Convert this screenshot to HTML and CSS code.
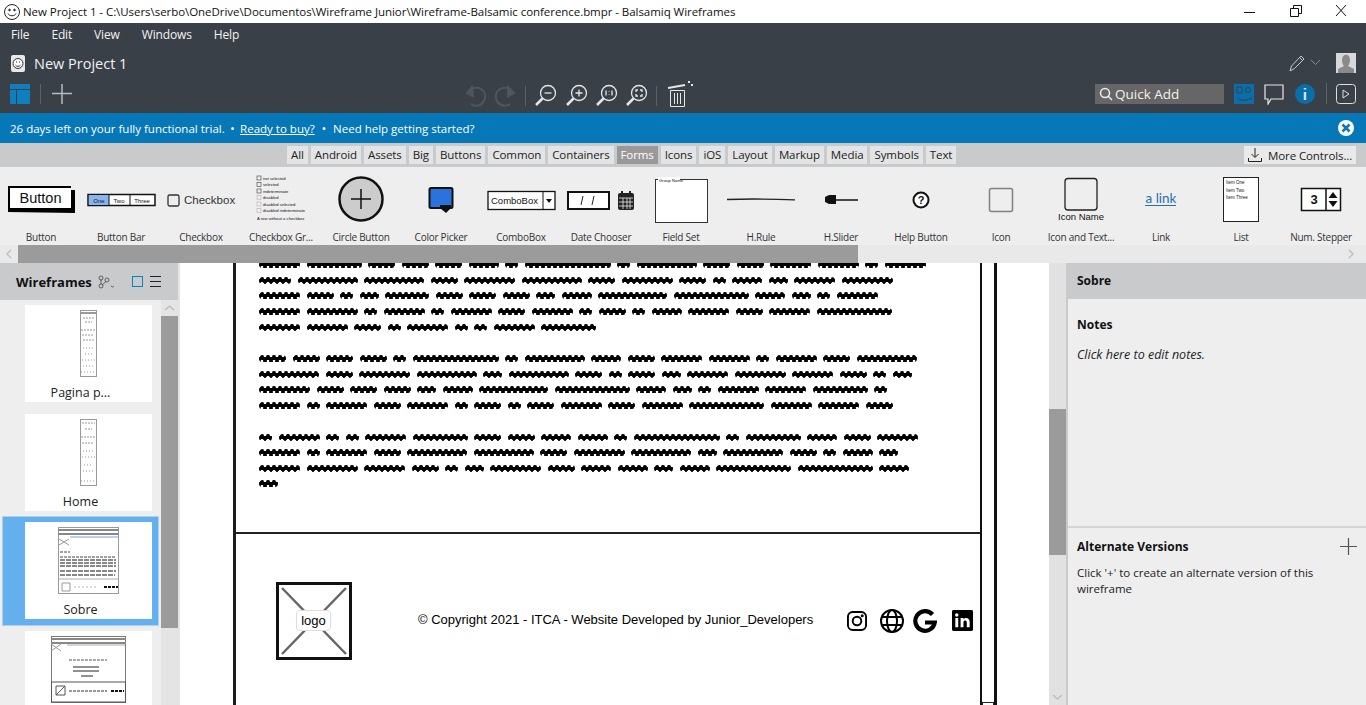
FILE: index.html
```html
<!DOCTYPE html>
<html lang="en">
<head>
    <meta charset="UTF-8">
    <title>New Project 1 - Balsamiq Wireframes</title>
    <link rel="stylesheet" href="styles.css">
</head>
<body>
    <div class="titlebar">
        <svg class="app-face" width="18" height="18" viewBox="0 0 18 18" fill="none" stroke="#222"><circle cx="9" cy="9" r="7.5"/><circle cx="6.5" cy="7" r=".8" fill="#222"/><circle cx="11.5" cy="7" r=".8" fill="#222"/><path d="M5 10.5c1 3 7 3 8 0"/></svg>
        <span class="title-text">New Project 1 - C:\Users\serbo\OneDrive\Documentos\Wireframe Junior\Wireframe-Balsamic conference.bmpr - Balsamiq Wireframes</span>
        <svg class="win-controls" width="112" height="23" viewBox="0 0 112 23" fill="none" stroke="#111"><path d="M0 12.500h11"/><path d="M46.500 8.500h8v8h-8zM49.500 8.500v-3h8v8h-3"/><path d="M92 5l10 11M102 5L92 16"/></svg>
    </div>

    <div class="menubar">
        <span>File</span><span>Edit</span><span>View</span><span>Windows</span><span>Help</span>
    </div>

    <div class="project-row">
        <svg width="14" height="17" viewBox="0 0 14 17"><rect width="14" height="17" rx="2" fill="#e8e8e8"/><circle cx="7" cy="8.500" r="5" fill="#fff" stroke="#333"/><path d="M4.500 10c1 1.800 4 1.800 5 0" stroke="#333" fill="none"/><path d="M5 7h1M8 7h1" stroke="#333"/></svg>
        <span class="project-name">New Project 1</span>
        <svg class="pencil" width="32" height="18" viewBox="0 0 32 18" fill="none" stroke="#c8c8c8"><path d="M1 17l1.500-5L12 2l3 3-9.500 9.500zM10.500 3.500l3 3"/><path d="M22 6l4.500 4.500L31 6" stroke="#8b8f94"/></svg>
        <div class="avatar"><svg width="20" height="20" viewBox="0 0 20 20"><rect width="20" height="20" fill="#d8d8d8"/><path d="M6 7c0-7 8-7 8 0 0 3-1 5-2 6l6 3v4H2v-4l6-3c-1-1-2-3-2-6z" fill="#8a8a8a"/></svg></div>
    </div>

    <div class="toolbar">
        <svg width="64" height="24" viewBox="0 0 64 24"><path d="M0 0h20v5H0zM0 6h6v14H0zM7 6h13v14H7z" fill="#0f7fc0" transform="translate(0 2)"/><path d="M30.500 2v20" stroke="#5c6268"/><path d="M42 11.500h20M52 2v20" stroke="#b8babd" stroke-width="1.500"/></svg>
        <svg class="tool-mid" width="228" height="28" viewBox="0 0 228 28" fill="none">
            <g stroke="#50565c" stroke-width="2"><path d="M3 13a9 9 0 1 1 3 11"/><path d="M8 6L2 13l7 4" fill="#50565c"/><path d="M48 13a9 9 0 1 0-3 11"/><path d="M42 6l7 7-7 4" fill="#50565c"/></g>
            <path d="M60.500 6v20M191.500 6v20" stroke="#5c6268"/>
            <g stroke="#e6e6e6" stroke-width="1.300">
                <circle cx="83" cy="13" r="7.500"/><path d="M77.500 18.500L71 25" stroke-width="2.500"/><path d="M79.500 13h7"/>
                <circle cx="114" cy="13" r="7.500"/><path d="M108.500 18.500L102 25" stroke-width="2.500"/><path d="M110.500 13h7M114 9.500v7"/>
                <circle cx="144" cy="13" r="7.500"/><path d="M138.500 18.500L132 25" stroke-width="2.500"/><path d="M141 10.500v5M147 10.500v5M144 11.500v.5M144 14v.5"/>
                <circle cx="174" cy="13" r="7.500"/><path d="M168.500 18.500L162 25" stroke-width="2.500"/><path d="M171 12v-2h2M175 10h2v2M177 14v2h-2M173 16h-2v-2"/>
            </g>
            <g stroke="#e6e6e6"><path d="M203 8l17-3" stroke-width="2"/><path d="M205.500 10.500h14v16h-14zM209.500 13v11M212.500 13v11M215.500 13v11"/><path d="M224 1v2M227 4v2" stroke-width="2"/></g>
        </svg>
        <div class="quick-add">
            <svg width="14" height="14" viewBox="0 0 14 14" fill="none" stroke="#eee" stroke-width="1.500"><circle cx="6" cy="6" r="4.500"/><path d="M9 9l4 4"/></svg>
            <span>Quick Add</span>
        </div>
        <svg class="tool-right" width="122" height="22" viewBox="0 0 122 22" fill="none">
            <rect x="0" y="1" width="20" height="20" fill="#0a6eaa"/>
            <path d="M3 4h5v6H3zM3 15c4 3 10 3 14 0M17 14v3" stroke="#3a4047"/><circle cx="14" cy="7" r="2.500" stroke="#3a4047"/>
            <path d="M31 2h18v14H37l-3 5v-5h-3z" stroke="#e8e8e8" stroke-width="1.200"/>
            <circle cx="71" cy="11" r="10" fill="#0a6eaa"/><path d="M71 5v1.500M71 9v8" stroke="#cfe4f2" stroke-width="2.500"/>
            <path d="M92.500 0v21" stroke="#5c6268"/>
            <rect x="102.500" y="1.500" width="19" height="19" rx="3" stroke="#e0e0e0"/><path d="M109 7l6 4-6 4z" stroke="#e0e0e0"/>
        </svg>
    </div>

    <div class="trial-banner">
        <span>26 days left on your fully functional trial.</span><b class="dot">•</b><u>Ready to buy?</u><b class="dot dot-wide">•</b><span>Need help getting started?</span>
        <svg class="banner-close" width="16" height="16" viewBox="0 0 16 16"><circle cx="8" cy="8" r="8" fill="#fff"/><path d="M4.500 4.500l7 7M11.500 4.500l-7 7" stroke="#0678b7" stroke-width="2.500"/></svg>
    </div>

    <div class="tabs">
        <span class="tab">All</span><span class="tab">Android</span><span class="tab">Assets</span><span class="tab">Big</span><span class="tab">Buttons</span><span class="tab">Common</span><span class="tab">Containers</span><span class="tab tab-active">Forms</span><span class="tab">Icons</span><span class="tab">iOS</span><span class="tab">Layout</span><span class="tab">Markup</span><span class="tab">Media</span><span class="tab">Symbols</span><span class="tab">Text</span>
        <span class="more-controls"><svg width="14" height="14" viewBox="0 0 14 14" fill="none" stroke="#222"><path d="M7 0v9M3.500 6L7 9.500 10.500 6M.5 10v3.500h13V10"/></svg>More Controls...</span>
    </div>

    <div class="strip">
        <div class="comp"><svg width="80" height="62" viewBox="0 0 80 62"><path d="M7 16h63v4h4v23l-67-1z" fill="#000"/><rect x="9" y="18" width="61" height="20" fill="#fff"/><text x="39.500" y="33" class="sk-big">Button</text></svg><span>Button</span></div>
        <div class="comp"><svg width="80" height="62" viewBox="0 0 80 62"><rect x="7" y="24.500" width="67" height="11" fill="#fff" stroke="#111" stroke-width="1.500"/><rect x="8" y="25" width="20" height="10" fill="#8ab4f0"/><path d="M28 25v10M49 25v10" stroke="#111"/><text x="18" y="32.500" class="sk-tiny">One</text><text x="38" y="32.500" class="sk-tiny">Two</text><text x="61" y="32.500" class="sk-tiny">Three</text></svg><span>Button Bar</span></div>
        <div class="comp"><svg width="80" height="62" viewBox="0 0 80 62"><rect x="7" y="25" width="11" height="11" rx="1.500" fill="none" stroke="#333" stroke-width="1.300"/><text x="23" y="34" class="sk-label">Checkbox</text></svg><span>Checkbox</span></div>
        <div class="comp"><svg width="80" height="62" viewBox="0 0 80 62"><g fill="none" stroke="#555" stroke-width=".7"><rect x="16" y="6" width="4" height="4"/><rect x="16" y="12.500" width="4" height="4"/><rect x="16" y="19" width="4" height="4"/></g><g fill="none" stroke="#bbb" stroke-width=".7"><rect x="16" y="25.500" width="4" height="4"/><rect x="16" y="32" width="4" height="4"/><rect x="16" y="38.500" width="4" height="4"/></g><g class="sk-micro"><text x="22" y="9.500">not selected</text><text x="22" y="16">selected</text><text x="22" y="22.500">indeterminate</text><text x="22" y="29" fill="#aaa">disabled</text><text x="22" y="35.500" fill="#aaa">disabled selected</text><text x="22" y="42" fill="#aaa">disabled indeterminate</text><text x="16" y="49.500">A row without a checkbox</text></g></svg><span>Checkbox Gr...</span></div>
        <div class="comp"><svg width="80" height="62" viewBox="0 0 80 62"><circle cx="40" cy="29" r="21.500" fill="#ccc" stroke="#111" stroke-width="2.500"/><path d="M30 29h20M40 19v20" stroke="#111" stroke-width="1.500"/></svg><span>Circle Button</span></div>
        <div class="comp"><svg width="80" height="62" viewBox="0 0 80 62"><rect x="28.500" y="18" width="23" height="20" rx="1.500" fill="#2a73dc" stroke="#111" stroke-width="2"/><path d="M39 35h11v3l-5 5-6-5z" fill="#111"/></svg><span>Color Picker</span></div>
        <div class="comp"><svg width="80" height="62" viewBox="0 0 80 62"><rect x="7" y="21.500" width="67" height="18" fill="#fff" stroke="#111" stroke-width="1.300"/><path d="M62 21.500v18" stroke="#111"/><path d="M65 29h6l-3 4z" fill="#111"/><text x="10" y="33.500" class="sk-small">ComboBox</text></svg><span>ComboBox</span></div>
        <div class="comp"><svg width="80" height="62" viewBox="0 0 80 62"><rect x="7" y="22" width="41" height="17" fill="#fff" stroke="#111" stroke-width="2"/><path d="M20 35l2-9M31 35l2-9" stroke="#222"/><g fill="#222"><rect x="57" y="23" width="16" height="17" rx="2"/><path d="M60 21h2v4h-2zM68 21h2v4h-2z"/></g><path d="M58 28h14M58 32h14M58 36h14M62 28v11M66 28v11M69 28v11" stroke="#eee" stroke-width=".8"/></svg><span>Date Chooser</span></div>
        <div class="comp"><svg width="80" height="62" viewBox="0 0 80 62"><rect x="14.500" y="9.500" width="52" height="43" fill="#fff" stroke="#333"/><rect x="17" y="7" width="22" height="5" fill="#fff"/><text x="18" y="11.500" class="sk-micro">Group Name</text></svg><span>Field Set</span></div>
        <div class="comp"><svg width="80" height="62" viewBox="0 0 80 62"><path d="M6 29.500c20-.8 45-.5 68 .3" stroke="#222" stroke-width="1.300" fill="none"/></svg><span>H.Rule</span></div>
        <div class="comp"><svg width="80" height="62" viewBox="0 0 80 62"><path d="M24 30h33" stroke="#111" stroke-width="1.500"/><path d="M24 27l4-2h7v9h-7l-4-2z" fill="#111"/></svg><span>H.Slider</span></div>
        <div class="comp"><svg width="80" height="62" viewBox="0 0 80 62"><circle cx="40" cy="30" r="7.500" fill="#fff" stroke="#111" stroke-width="2"/><text x="40" y="34" class="sk-help">?</text></svg><span>Help Button</span></div>
        <div class="comp"><svg width="80" height="62" viewBox="0 0 80 62"><rect x="28.500" y="18.500" width="23" height="23" rx="2" fill="none" stroke="#808080" stroke-width="1.500"/></svg><span>Icon</span></div>
        <div class="comp"><svg width="80" height="62" viewBox="0 0 80 62"><rect x="24" y="8.500" width="32" height="31.500" rx="3" fill="none" stroke="#222" stroke-width="1.300"/><text x="40" y="50" class="sk-small">Icon Name</text></svg><span>Icon and Text...</span></div>
        <div class="comp"><svg width="80" height="62" viewBox="0 0 80 62"><text x="40" y="33" class="sk-link">a link</text><path d="M24 35.500h31" stroke="#2a6ea8"/></svg><span>Link</span></div>
        <div class="comp"><svg width="80" height="62" viewBox="0 0 80 62"><rect x="22.500" y="7.500" width="35" height="44" fill="#fff" stroke="#222"/><g class="sk-list"><text x="25" y="14">Item One</text><text x="25" y="21.500">Item Two</text><text x="25" y="29">Item Three</text></g></svg><span>List</span></div>
        <div class="comp"><svg width="80" height="62" viewBox="0 0 80 62"><rect x="20.500" y="18.500" width="39" height="22" fill="#fff" stroke="#111" stroke-width="1.500"/><path d="M45 18.500v22" stroke="#111" stroke-width="1.500"/><path d="M47.500 28l4.500-6 4.500 6zM47.500 31h9L52 37z" fill="#111"/><text x="33" y="34" class="sk-num">3</text></svg><span>Num. Stepper</span></div>
    </div>

    <div class="strip-scroll">
        <svg width="18" height="18" viewBox="0 0 18 18" fill="none" stroke="#bbb" stroke-width="1.300"><path d="M11 5L7 9l4 4"/></svg>
        <div class="strip-thumb"></div>
        <svg class="strip-next" width="18" height="18" viewBox="0 0 18 18" fill="none" stroke="#bbb" stroke-width="1.300"><path d="M7 5l4 4-4 4"/></svg>
    </div>

    <div class="main">
        <aside class="wf-panel">
            <div class="wf-head">
                <b>Wireframes</b>
                <svg class="wf-tree" width="17" height="14" viewBox="0 0 17 14" fill="none" stroke="#444" stroke-width=".8"><circle cx="3" cy="3" r="2"/><circle cx="9" cy="5" r="2"/><circle cx="3" cy="11" r="2"/><path d="M3 5v4M4 10l4-3.500M13 11l1.500 1 1.500-1"/></svg>
                <span class="wf-square"></span>
                <svg width="11" height="11" viewBox="0 0 11 11" stroke="#222"><path d="M0 .5h11M0 5.500h11M0 10.500h11"/></svg>
            </div>
            <div class="wf-body">
                <div class="wf-list">
                    <div class="wf-row">
                        <div class="wf-card">
                            <svg width="17" height="67" viewBox="0 0 17 67" fill="none" stroke="#999"><rect x=".5" y=".5" width="16" height="66"/><path d="M0 3h17" stroke-width="2"/><path d="M3 8h11M5 12h7M1 20h15M2 25h12M3 30h11" stroke-dasharray="2 1"/><path d="M3 38h11M5 44h8M2 50h13M3 56h11M1 62h15" stroke-dasharray="1 2"/></svg>
                            <span>Pagina p...</span>
                        </div>
                    </div>
                    <div class="wf-row">
                        <div class="wf-card">
                            <svg width="17" height="67" viewBox="0 0 17 67" fill="none" stroke="#999"><rect x=".5" y=".5" width="16" height="66"/><path d="M2 4h13M5 10h7M1 18h15M2 24h12" stroke-dasharray="2 1"/><path d="M3 32h11M2 38h13M4 46h9M3 52h11M1 62h15" stroke-dasharray="1 2"/></svg>
                            <span>Home</span>
                        </div>
                    </div>
                    <div class="wf-row wf-row-active">
                        <div class="wf-card">
                            <svg width="61" height="67" viewBox="0 0 61 67" fill="none" stroke="#444"><rect x=".5" y=".5" width="60" height="66" stroke="#999"/><path d="M0 3h61M0 7h61" stroke="#888" stroke-width="2"/><path d="M1 12l10 6M11 12L1 18" stroke="#999"/><path d="M12 10h48" stroke="#7aa0d8"/><path d="M2 25h10M2 30h55" stroke-dasharray="3 1"/><path d="M2 33h56M2 36h56M2 39h56M2 44h56M2 48h55" stroke="#111" stroke-dasharray="5 1"/><path d="M0 52h61" stroke="#aaa"/><path d="M4 56h8v8H4z" stroke="#999"/><path d="M16 60h24" stroke="#bbb" stroke-dasharray="2 2"/><path d="M46 60h14" stroke="#111" stroke-width="2" stroke-dasharray="3 1"/></svg>
                            <span>Sobre</span>
                        </div>
                    </div>
                    <div class="wf-row">
                        <div class="wf-card">
                            <svg width="75" height="67" viewBox="0 0 75 67" fill="none" stroke="#555"><rect x=".5" y=".5" width="74" height="66" stroke="#777"/><path d="M0 3h75M0 7h75" stroke="#888" stroke-width="2"/><path d="M0 8l10 7M10 8L0 15" stroke="#999"/><path d="M16 9h58" stroke="#aaa"/><path d="M18 24h38" stroke-dasharray="3 1"/><path d="M22 31h26M22 35h26M30 40h12" stroke="#222"/><rect x=".5" y="46" width="74" height="20"/><path d="M5 50h9v9H5zM5 59l9-9" /><path d="M18 55h38" stroke="#333" stroke-dasharray="3 1"/><path d="M60 55h13" stroke="#111" stroke-width="2" stroke-dasharray="3 1"/></svg>
                        </div>
                    </div>
                </div>
                <div class="wf-scroll">
                    <svg width="17" height="16" viewBox="0 0 17 16" fill="none" stroke="#bbb" stroke-width="1.300"><path d="M4 10l4.500-4 4.500 4"/></svg>
                    <div class="wf-scroll-thumb"></div>
                </div>
            </div>
        </aside>

        <section class="canvas">
            <div class="frame">
                <div class="page">
                    <div class="article">
                        <div class="scribble">
                            <div><i class="w41"></i><i class="w55"></i><i class="w27"></i><i class="w27"></i><i class="w27"></i><i class="w30"></i><i class="w13"></i><i class="w86"></i><i class="w13"></i><i class="w60"></i><i class="w27"></i><i class="w27"></i><i class="w41"></i><i class="w41"></i><i class="w13"></i><i class="w41"></i></div>
                            <div><i class="w32"></i><i class="w60"></i><i class="w60"></i><i class="w27"></i><i class="w51"></i><i class="w60"></i><i class="w27"></i><i class="w51"></i><i class="w27"></i><i class="w13"></i><i class="w30"></i><i class="w19"></i><i class="w41"></i><i class="w51"></i></div>
                            <div><i class="w41"></i><i class="w27"></i><i class="w13"></i><i class="w19"></i><i class="w44"></i><i class="w27"></i><i class="w27"></i><i class="w27"></i><i class="w19"></i><i class="w30"></i><i class="w69"></i><i class="w75"></i><i class="w30"></i><i class="w19"></i><i class="w13"></i><i class="w41"></i></div>
                            <div><i class="w41"></i><i class="w51"></i><i class="w13"></i><i class="w41"></i><i class="w13"></i><i class="w41"></i><i class="w27"></i><i class="w41"></i><i class="w13"></i><i class="w27"></i><i class="w13"></i><i class="w30"></i><i class="w41"></i><i class="w27"></i><i class="w41"></i><i class="w75"></i></div>
                            <div class="para-end"><i class="w41"></i><i class="w41"></i><i class="w27"></i><i class="w13"></i><i class="w41"></i><i class="w13"></i><i class="w13"></i><i class="w41"></i><i class="w55"></i></div>

                            <div><i class="w27"></i><i class="w27"></i><i class="w27"></i><i class="w27"></i><i class="w13"></i><i class="w86"></i><i class="w13"></i><i class="w60"></i><i class="w30"></i><i class="w27"></i><i class="w41"></i><i class="w41"></i><i class="w13"></i><i class="w41"></i><i class="w27"></i><i class="w60"></i></div>
                            <div><i class="w60"></i><i class="w27"></i><i class="w51"></i><i class="w60"></i><i class="w19"></i><i class="w60"></i><i class="w27"></i><i class="w13"></i><i class="w27"></i><i class="w19"></i><i class="w41"></i><i class="w51"></i><i class="w41"></i><i class="w27"></i><i class="w13"></i><i class="w19"></i></div>
                            <div><i class="w51"></i><i class="w27"></i><i class="w27"></i><i class="w27"></i><i class="w19"></i><i class="w30"></i><i class="w69"></i><i class="w75"></i><i class="w30"></i><i class="w19"></i><i class="w13"></i><i class="w41"></i><i class="w41"></i><i class="w55"></i><i class="w13"></i></div>
                            <div class="para-end"><i class="w41"></i><i class="w13"></i><i class="w41"></i><i class="w27"></i><i class="w41"></i><i class="w13"></i><i class="w27"></i><i class="w13"></i><i class="w27"></i><i class="w41"></i><i class="w27"></i><i class="w41"></i><i class="w75"></i><i class="w41"></i><i class="w41"></i><i class="w27"></i></div>

                            <div><i class="w13"></i><i class="w41"></i><i class="w13"></i><i class="w13"></i><i class="w41"></i><i class="w55"></i><i class="w27"></i><i class="w27"></i><i class="w30"></i><i class="w30"></i><i class="w13"></i><i class="w86"></i><i class="w13"></i><i class="w55"></i><i class="w30"></i><i class="w27"></i><i class="w41"></i></div>
                            <div><i class="w41"></i><i class="w13"></i><i class="w41"></i><i class="w27"></i><i class="w60"></i><i class="w60"></i><i class="w27"></i><i class="w51"></i><i class="w60"></i><i class="w19"></i><i class="w60"></i><i class="w27"></i><i class="w13"></i><i class="w30"></i><i class="w19"></i></div>
                            <div><i class="w41"></i><i class="w51"></i><i class="w41"></i><i class="w27"></i><i class="w13"></i><i class="w19"></i><i class="w51"></i><i class="w27"></i><i class="w30"></i><i class="w30"></i><i class="w19"></i><i class="w30"></i><i class="w75"></i><i class="w75"></i><i class="w30"></i></div>
                            <div><i class="w19"></i></div>
                        </div>
                    </div>
                    <div class="site-footer">
                        <div class="logo-box">
                            <svg width="70" height="72" viewBox="0 0 70 72" stroke="#666" stroke-width="2.500"><path d="M3 3l64 66M67 3L3 69"/></svg>
                            <span class="logo-label">logo</span>
                        </div>
                        <span class="copyright">© Copyright 2021 - ITCA - Website Developed by Junior_Developers</span>
                        <div class="social">
                            <svg width="20" height="20" viewBox="0 0 21 21" fill="none" stroke="#000" stroke-width="2"><rect x="1" y="1" width="19" height="19" rx="5"/><circle cx="10.500" cy="10.500" r="4.500"/><circle cx="16" cy="5" r=".6" fill="#000"/></svg>
                            <svg class="s-globe" width="24" height="24" viewBox="0 0 24 24" fill="none" stroke="#000" stroke-width="2"><circle cx="12" cy="12" r="11"/><ellipse cx="12" cy="12" rx="5" ry="11"/><path d="M1.500 8h21M1.500 16h21"/></svg>
                            <svg class="s-google" width="24" height="24" viewBox="0 0 24 24" fill="none" stroke="#000" stroke-width="4.200"><path d="M19.500 5.500A9.800 9.800 0 1 0 21.800 13.500H12"/></svg>
                            <svg class="s-in" width="21" height="21" viewBox="0 0 22 22"><rect width="22" height="22" rx="1.500" fill="#000"/><path d="M3.500 8.500h3V18h-3zM9 8.500h3v1.300c1.800-2.300 6.500-2 6.500 2.500V18h-3v-5c0-2.500-3.500-2.500-3.500 0v5H9z" fill="#fff"/><circle cx="5" cy="5.300" r="1.800" fill="#fff"/></svg>
                        </div>
                    </div>
                </div>
                <div class="frame-scroll"><span></span></div>
            </div>
        </section>

        <div class="canvas-scroll">
            <div class="canvas-thumb"></div>
            <svg class="canvas-down" width="17" height="16" viewBox="0 0 17 16" fill="none" stroke="#bbb" stroke-width="1.300"><path d="M4 6l4.500 4 4.500-4"/></svg>
        </div>

        <aside class="inspector">
            <div class="inspector-head">Sobre</div>
            <div class="notes">
                <h3>Notes</h3>
                <p class="notes-hint">Click here to edit notes.</p>
            </div>
            <div class="versions">
                <div class="versions-head">
                    <h3>Alternate Versions</h3>
                    <svg width="17" height="17" viewBox="0 0 17 17" stroke="#555" stroke-width="1.200"><path d="M0 8.500h17M8.500 0v17"/></svg>
                </div>
                <p>Click '+' to create an alternate version of this wireframe</p>
            </div>
        </aside>
    </div>
</body>
</html>
```

FILE: styles.css
```css
* {
    box-sizing: border-box;
}
html, body {
    margin: 0;
    height: 705px;
    overflow: hidden;
}
body {
    font-family: "Open Sans", "Noto Sans", "Liberation Sans", sans-serif;
    font-size: 12px;
    color: #222;
    background: #eee;
}
svg {
    display: block;
    flex: none;
}

/* window chrome */
.titlebar {
    height: 23px;
    background: #fff;
    display: flex;
    align-items: center;
    padding-left: 3px;
    color: #111;
}
.title-text {
    margin-left: 2px;
    font-size: 11.5px;
    letter-spacing: -0.05px;
    white-space: nowrap;
}
.win-controls {
    margin-left: auto;
    margin-right: 10px;
}
.menubar {
    height: 22px;
    background: #3a4047;
    color: #f2f2f2;
    display: flex;
    align-items: center;
    padding-left: 11px;
    gap: 22px;
    letter-spacing: -0.15px;
}
.project-row {
    height: 33px;
    background: #3a4047;
    display: flex;
    align-items: center;
    padding: 3px 10px 0 11px;
    color: #f2f2f2;
}
.project-name {
    margin-left: 9px;
    font-size: 14.5px;
}
.pencil {
    margin-left: auto;
    margin-right: 15px;
}
.avatar {
    width: 20px;
    height: 20px;
}
.toolbar {
    height: 35px;
    background: #3a4047;
    display: flex;
    align-items: center;
    padding: 0 10px 4px;
}
.tool-mid {
    margin-left: 391px;
}
.quick-add {
    width: 130px;
    height: 20px;
    margin-left: 402px;
    background: #666;
    color: #f2f2f2;
    font-size: 13.5px;
    display: flex;
    align-items: center;
    gap: 2px;
    padding-left: 4px;
}
.tool-right {
    margin-left: 10px;
}
.trial-banner {
    height: 30px;
    background: #0678b7;
    color: #fff;
    display: flex;
    align-items: center;
    padding: 0 12px 0 10px;
    font-size: 11.5px;
}
.trial-banner .dot {
    margin: 0 6px;
    font-size: 9px;
}
.trial-banner .dot-wide {
    margin: 0 7.5px;
}
.banner-close {
    margin-left: auto;
}

/* component library */
.tabs {
    height: 24px;
    background: #c9cacc;
    display: flex;
    align-items: center;
    gap: 3px;
    padding: 0 10px 0 287px;
    font-size: 11.5px;
    letter-spacing: -0.1px;
}
.tab {
    height: 18px;
    line-height: 18px;
    padding: 0 4px;
    background: #e3e4e5;
    white-space: nowrap;
}
.tab-active {
    background: #999;
    color: #fff;
}
.more-controls {
    margin-left: auto;
    height: 18px;
    width: 112px;
    background: #e9e9ea;
    display: flex;
    align-items: center;
    gap: 6px;
    padding-left: 4px;
    white-space: nowrap;
}
.strip {
    height: 78px;
    background: #eee;
    display: flex;
    padding: 3px 0 0 1px;
}
.comp {
    width: 80px;
    flex: none;
    text-align: center;
    font-size: 10px;
    letter-spacing: -0.25px;
    color: #333;
    white-space: nowrap;
}
.comp span {
    display: block;
    line-height: 12px;
    margin-top: -1px;
}
.comp text {
    font-family: "Liberation Sans", sans-serif;
    letter-spacing: 0;
    fill: #111;
}
.comp .sk-big {
    font-size: 14.5px;
    text-anchor: middle;
}
.comp .sk-tiny {
    font-size: 6px;
    text-anchor: middle;
}
.comp .sk-label {
    font-size: 11.5px;
    fill: #333;
}
.comp .sk-small {
    font-size: 9.500px;
}
.comp .sk-small[x="40"] {
    text-anchor: middle;
}
.comp .sk-micro text,
.comp text.sk-micro {
    font-size: 4.200px;
}
.comp .sk-help {
    font-size: 11px;
    font-weight: bold;
    text-anchor: middle;
}
.comp .sk-link {
    font-family: "Lato", sans-serif;
    font-size: 13.500px;
    text-anchor: middle;
    fill: #2a6ea8;
}
.comp .sk-list text {
    font-size: 4.500px;
}
.comp .sk-num {
    font-size: 13px;
    font-weight: bold;
    text-anchor: middle;
}
.strip-scroll {
    height: 18px;
    background: #e9e9e9;
    display: flex;
}
.strip-thumb {
    width: 840px;
    background: #9b9b9b;
}
.strip-next {
    margin-left: auto;
    margin-right: 6px;
}

/* three columns below the library */
.main {
    height: 442px;
    display: flex;
    overflow: hidden;
}
.wf-panel {
    width: 180px;
    flex: none;
    background: #eee;
    border-right: 2px solid #e4e4e4;
    display: flex;
    flex-direction: column;
}
.wf-head {
    height: 37px;
    flex: none;
    background: #c9cacc;
    display: flex;
    align-items: center;
    padding-left: 16px;
}
.wf-head b {
    font-size: 13px;
    color: #111;
}
.wf-tree {
    margin-left: 6px;
}
.wf-square {
    width: 11px;
    height: 11px;
    margin: 0 7px 0 17px;
    border: 1.500px solid #0f7fc0;
}
.wf-body {
    flex: 1;
    display: flex;
    min-height: 0;
}
.wf-list {
    width: 161px;
    flex: none;
}
.wf-row {
    height: 108.670px;
    margin-left: 3px;
    width: 155px;
    padding: 5px 0 0 22px;
}
.wf-row-active {
    height: 107.500px;
    margin-bottom: 1.170px;
    background: #64b0ef;
    box-shadow: 0 0 0 1px #a9d2f2;
}
.wf-card {
    width: 127px;
    height: 97px;
    background: #fff;
    display: flex;
    flex-direction: column;
    align-items: center;
    padding-top: 5px;
    color: #222;
}
.wf-card span {
    margin: 7px 16px 0 0;
    font-size: 12.5px;
    line-height: 18px;
}
.wf-scroll {
    width: 17px;
    flex: none;
    background: #e4e4e4;
}
.wf-scroll-thumb {
    height: 312px;
    background: #9b9b9b;
}

.canvas {
    width: 869px;
    flex: none;
    background: #fff;
    overflow: hidden;
}
.frame {
    margin: -8px 0 0 53px;
    width: 764px;
    height: 470px;
    display: flex;
}
.page {
    width: 749px;
    flex: none;
    border-left: 3px solid #1c1c1c;
    border-right: 2px solid #111;
}
.article {
    height: 279px;
    border-bottom: 2.500px solid #222;
    padding: 2px 0 0 23px;
}
.scribble > div {
    height: 15.600px;
    display: flex;
    align-items: center;
    gap: 6.500px;
}
.scribble > .para-end {
    margin-bottom: 16px;
}
.scribble i {
    height: 7px;
    flex: none;
    border-radius: 4px;
    filter: blur(0.35px);
    background:
        linear-gradient(#000, #000) 0 2px / 100% 3px no-repeat,
        radial-gradient(circle, #000 1.500px, transparent 2.100px) 0 -0.500px / 6px 4px repeat-x,
        radial-gradient(circle, #000 1.500px, transparent 2.100px) 3px 3.500px / 6px 4px repeat-x;
}
.w13 { width: 13px; }
.w19 { width: 19px; }
.w27 { width: 27px; }
.w30 { width: 30px; }
.w32 { width: 32px; }
.w41 { width: 41px; }
.w44 { width: 44px; }
.w51 { width: 51px; }
.w55 { width: 55px; }
.w60 { width: 60px; }
.w69 { width: 69px; }
.w75 { width: 75px; }
.w86 { width: 86px; }

.site-footer {
    display: flex;
    align-items: flex-start;
    padding: 47.500px 0 0 40px;
}
.logo-box {
    position: relative;
    width: 76px;
    height: 78px;
    flex: none;
    border: 3px solid #111;
}
.logo-label {
    position: absolute;
    left: 17px;
    top: 25px;
    width: 35px;
    height: 21px;
    line-height: 19px;
    text-align: center;
    background: #fff;
    border: 1px solid #ddd;
    border-radius: 4px;
    font-family: "Liberation Sans", sans-serif;
    font-size: 13px;
    color: #000;
}
.copyright {
    margin: 30px 0 0 66px;
    width: 400px;
    font-family: "Liberation Sans", sans-serif;
    font-size: 13px;
    line-height: 16px;
    color: #000;
    white-space: nowrap;
}
.social {
    display: flex;
    align-items: center;
    margin: 27px 0 0 29px;
}
.s-globe {
    margin-left: 13px;
}
.s-google {
    margin-left: 9px;
}
.s-in {
    margin-left: 15px;
}
.frame-scroll {
    width: 15px;
    flex: none;
    border-right: 3px solid #111;
    display: flex;
    flex-direction: column;
    justify-content: flex-end;
}
.frame-scroll span {
    height: 10px;
    border: 1.500px solid #222;
    margin-bottom: 13px;
}
.canvas-scroll {
    position: relative;
    width: 17px;
    flex: none;
    background: #e1e1e1;
    padding-top: 146px;
}
.canvas-thumb {
    height: 146px;
    background: #9b9b9b;
}
.canvas-down {
    position: absolute;
    left: 0;
    bottom: 0;
}
.inspector {
    flex: 1;
    background: #eee;
    border-left: 2px solid #c9cacc;
    display: flex;
    flex-direction: column;
}
.inspector-head {
    height: 36px;
    line-height: 36px;
    background: #c9cacc;
    padding-left: 9px;
    font-size: 12px;
    font-weight: 700;
    color: #111;
}
.inspector h3 {
    margin: 0;
    font-size: 12px;
    font-weight: 700;
    color: #111;
}
.notes {
    height: 229px;
    padding: 17px 9px 0;
    border-bottom: 2px solid #d4d4d4;
}
.notes-hint {
    margin: 13px 0 0;
    font-style: italic;
    font-size: 12.500px;
}
.versions {
    padding: 10px 9px 0;
}
.versions-head {
    display: flex;
    justify-content: space-between;
    align-items: center;
}
.versions p {
    margin: 10px 20px 0 0;
    font-size: 11.500px;
    line-height: 16px;
}
```
